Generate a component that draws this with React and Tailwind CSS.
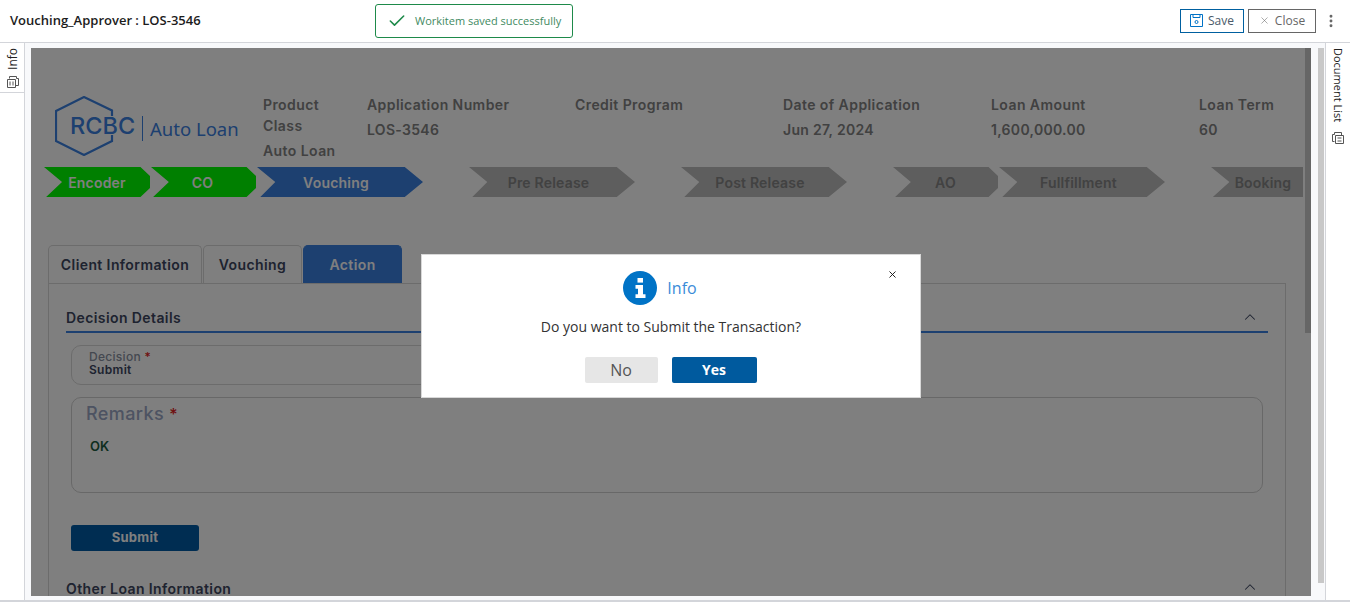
import React from "react";
import { ChevronUp, X, Check, MoreVertical } from "lucide-react";

const infoColumns = [
  { label: "Application Number", value: "LOS-3546" },
  { label: "Credit Program", value: "" },
  { label: "Date of Application", value: "Jun 27, 2024" },
  { label: "Loan Amount", value: "1,600,000.00" },
  { label: "Loan Term", value: "60" },
];

const SHORT_CHEVRON = "[clip-path:polygon(0_0,91%_0,100%_30%,100%_70%,91%_100%,2%_100%,17%_50%)]";
const LONG_CHEVRON = "[clip-path:polygon(0_0,89%_0,100%_50%,89%_100%,2%_100%,11%_50%)]";
const DONE = "bg-[#00ff00] text-white";
const CURRENT = "bg-[#3a80e0] text-white";
const TODO = "bg-[#bcbcbc] text-[#848484]";

const steps = [
  { name: "Encoder", cls: `w-[106px] ml-[13px] ${DONE} ${SHORT_CHEVRON}` },
  { name: "CO", cls: `w-[105px] ml-px ${DONE} pr-[2px] ${SHORT_CHEVRON}` },
  { name: "Vouching", cls: `w-[166px] ml-px ${CURRENT} pr-[8px] ${LONG_CHEVRON}` },
  { name: "Pre Release", cls: `w-[166px] ml-[46px] ${TODO} pr-[7px] ${LONG_CHEVRON}` },
  { name: "Post Release", cls: `w-[166px] ml-[46px] ${TODO} pr-[8px] ${LONG_CHEVRON}` },
  { name: "AO", cls: `w-[105px] ml-[46px] ${TODO} ${SHORT_CHEVRON}` },
  { name: "Fullfillment", cls: `w-[166px] ml-px ${TODO} pr-[7px] ${LONG_CHEVRON}` },
  { name: "Booking", cls: `w-[92px] ml-[46px] ${TODO} pl-[12px] [clip-path:polygon(0_0,100%_0,100%_100%,2%_100%,20%_50%)]` },
];

const RailIcon = () => (
  <svg width="14" height="14" viewBox="0 0 14 14" fill="none" stroke="#555" strokeWidth="1">
    <path d="M3.5 3.5V1.5h7V3.5" />
    <path d="M1.5 4.5h8V12.5h-8z" />
    <path d="M10.5 3.5h2V10.5h-3" />
    <path d="M4 6.5v4M7 6.5v4" />
  </svg>
);

const SaveIcon = () => (
  <svg width="13" height="13" viewBox="0 0 13 13" fill="none" stroke="#0072c6" strokeWidth="1">
    <path d="M.5.5h12v12H.5z" />
    <path d="M3 .5v3h7v-3" />
    <circle cx="6.5" cy="8" r="1.5" />
  </svg>
);

const Logo = () => (
  <div className="relative w-[185px] h-[60px] ml-[24px] mt-[48px]">
    <svg width="60" height="60" viewBox="0 0 60 60" fill="none" stroke="#3a80e0" strokeWidth="2.2" className="absolute left-0 top-0">
      <path d="M57 20V14.5L29 1 1 15V45L29 59 57 45V39" />
    </svg>
    <div className="absolute left-[15px] top-[15px] text-[#3a80e0] text-[23.5px] leading-[30px] font-['Inter',sans-serif] font-medium">RCBC</div>
    <div className="absolute left-[87px] top-[20px] h-[25px] w-px bg-[#3a80e0]" />
    <div className="absolute left-[95px] top-[18px] whitespace-nowrap text-[#3a80e0] text-[18.5px] leading-[30px] font-['Noto_Sans',sans-serif]">Auto Loan</div>
  </div>
);

const Tab = ({ children, active, width }) => (
  <div
    className={`h-[38px] ${width} flex items-center justify-center rounded-t-[5px] border border-b-0 text-[14px] font-semibold tracking-[0.4px] ${
      active ? "bg-[#3a80e0] border-[#3a80e0] text-white" : "bg-white border-[#d8d8d8] text-[#3c4660]"
    }`}
  >
    {children}
  </div>
);

const SectionTitle = ({ children }) => (
  <span className="text-[14px] font-semibold tracking-[0.4px] text-[#3c4660]">{children}</span>
);

export default function App() {
  return (
    <div className="relative w-[1350px] h-[602px] overflow-hidden bg-white flex flex-col font-['Open_Sans',sans-serif]">
      <header className="h-[43px] shrink-0 flex items-center justify-between pl-[10px] pr-[11px] border-b border-[#d3d5da]">
        <h1 className="text-[13px] font-semibold text-[#1c1c1c] -mt-px">Vouching_Approver : LOS-3546</h1>
        <div className="flex items-center -mt-px">
          <button className="w-[64px] h-[24px] flex items-center justify-center gap-[5px] border border-[#0060a0] text-[12px] text-[#4a5a6a]">
            <SaveIcon />
            Save
          </button>
          <button className="w-[68px] h-[24px] ml-[4px] flex items-center justify-center gap-[5px] border border-[#666666] text-[12px] text-[#666666]">
            <X size={11} strokeWidth={1.2} />
            Close
          </button>
          <MoreVertical size={16} strokeWidth={2.4} color="#666" className="ml-[7px]" />
        </div>
      </header>

      {/* toast */}
      <div className="absolute left-[375px] top-[4px] w-[198px] h-[34px] flex items-center pl-[11px] gap-[8px] border border-[#1e8a4a] rounded-[3px] bg-white text-[11px] text-[#3f8a5f]">
        <Check size={20} strokeWidth={1.9} color="#1e8a4a" />
        Workitem saved successfully
      </div>

      <div className="flex-1 min-h-0 flex">
        <aside className="w-[25px] shrink-0 border-r border-[#d3d5da]">
          <div className="h-[50px] border-b border-[#d3d5da] flex flex-col items-center pt-[5px] pl-px">
            <span className="[writing-mode:vertical-rl] rotate-180 text-[12px] leading-[12px] text-[#222]">Info</span>
            <div className="mt-[5px]"><RailIcon /></div>
          </div>
        </aside>

        <main className="flex-1 min-w-0 flex bg-[#f8f9fb] pt-[5px] pb-[4px] pl-[6px]">
          <div className="relative w-[1280px] bg-white overflow-hidden">
            <div className="h-full overflow-hidden flex flex-col font-['Inter',sans-serif]">
              <div className="flex h-[119px] shrink-0">
                <div className="w-[232px] shrink-0"><Logo /></div>
                <div className="flex pt-[46px] text-[14px] leading-[21px] font-semibold tracking-[0.42px] text-[#828282]">
                  <div className="w-[104px]">
                    <div>Product</div>
                    <div>Class</div>
                    <div className="mt-[4px]">Auto Loan</div>
                  </div>
                  {infoColumns.map((c) => (
                    <div key={c.label} className="w-[208px]">
                      <div>{c.label}</div>
                      <div className="mt-[4px] tracking-[0.3px]">{c.value}</div>
                    </div>
                  ))}
                </div>
              </div>

              <div className="flex h-[30px] shrink-0">
                {steps.map((s) => (
                  <div key={s.name} className={`h-[30px] shrink-0 flex items-center justify-center text-[14px] font-semibold tracking-[0.2px] ${s.cls}`}>
                    {s.name}
                  </div>
                ))}
              </div>

              <div className="flex pl-[17px] pt-[48px] gap-px shrink-0">
                <Tab width="w-[154px]">Client Information</Tab>
                <Tab width="w-[99px]">Vouching</Tab>
                <Tab width="w-[99px]" active>Action</Tab>
              </div>

              <section className="ml-[17px] w-[1238px] flex-1 border border-[#d8d8d8] border-b-0 px-[17px] pt-[23px]">
                <div className="h-[26px] flex items-start justify-between border-b-2 border-[#3a80e0] pr-[9px]">
                  <SectionTitle>Decision Details</SectionTitle>
                  <ChevronUp size={18} strokeWidth={1.4} color="#3c4660" className="mt-px" />
                </div>

                <div className="ml-[5px] mt-[12px] w-[500px] h-[40px] rounded-[10px] border border-[#d8d8d8] pl-[17px] pt-[4px] text-[12px] leading-[13px] tracking-[0.3px]">
                  <div className="text-[#8890a0] font-medium">Decision <span className="text-[#e02020]">*</span></div>
                  <div className="font-semibold text-[#3c4660]">Submit</div>
                </div>

                <div className="ml-[5px] mt-[12px] w-[1192px] h-[96px] rounded-[10px] border border-[#d0d0d0] pl-[14px] pt-[4px]">
                  <div className="text-[18px] leading-[24px] font-medium tracking-[0.4px] text-[#9aa6c4]">Remarks <span className="text-[#e02020] text-[16px]">*</span></div>
                  <div className="mt-[11px] ml-[4px] text-[13px] font-semibold tracking-[0.1px] text-[#1c5c40]">OK</div>
                </div>

                <button className="ml-[5px] mt-[32px] w-[128px] h-[26px] rounded-[3px] bg-[#005aa4] text-white text-[13px] font-bold tracking-[0.3px]">Submit</button>

                <div className="mt-[27px] flex items-start justify-between pr-[9px]">
                  <SectionTitle>Other Loan Information</SectionTitle>
                  <ChevronUp size={18} strokeWidth={1.4} color="#3c4660" />
                </div>
              </section>
            </div>

            {/* inner scrollbar */}
            <div className="absolute right-0 top-0 w-[6px] h-[285px] bg-[#cdcdcd]" />

            {/* backdrop + dialog */}
            <div className="absolute inset-0 bg-black/50 flex items-center justify-center pt-[7px]">
              <div className="relative w-[500px] h-[144px] bg-white flex flex-col items-center font-['Open_Sans',sans-serif] border border-[#d8d8d8]">
                <button className="absolute right-[22px] top-[14px] text-[#111]"><X size={11} strokeWidth={2} /></button>
                <div className="flex items-center gap-[10px] mt-[16px] ml-[-22px]">
                  <svg width="34" height="34" viewBox="0 0 34 34">
                    <circle cx="17" cy="17" r="17" fill="#0073c6" />
                    <rect x="14.5" y="7" width="5.5" height="4.6" fill="#fff" />
                    <path d="M12.5 14h7.5v9.2h2.5V27H12.5v-3.8h2.5v-5.4h-2.5z" fill="#fff" />
                  </svg>
                  <span className="text-[16px] text-[#3a8bd8]">Info</span>
                </div>
                <p className="mt-[12px] text-[14px] leading-[20px] text-[#333]">Do you want to Submit the Transaction?</p>
                <div className="flex gap-[14px] mt-[20px] -ml-[1px]">
                  <button className="w-[73px] h-[26px] rounded-[2px] bg-[#e6e6e6] text-[16px] text-[#555]">No</button>
                  <button className="w-[85px] h-[26px] rounded-[2px] bg-[#005a9e] text-[14px] font-bold text-white">Yes</button>
                </div>
              </div>
            </div>
          </div>

          <div className="ml-[7px] w-[6px] h-[535px] bg-[#c8c8c8] shrink-0" />
        </main>

        <aside className="w-[25px] shrink-0 border-l border-[#d3d5da] flex flex-col items-center pt-[5px] pr-px">
          <span className="[writing-mode:vertical-rl] text-[11px] leading-[12px] text-[#222]">Document List</span>
          <div className="mt-[9px] -rotate-90"><RailIcon /></div>
        </aside>
      </div>

      <div className="h-[2px] shrink-0 bg-[#d3d5da]" />
    </div>
  );
}
